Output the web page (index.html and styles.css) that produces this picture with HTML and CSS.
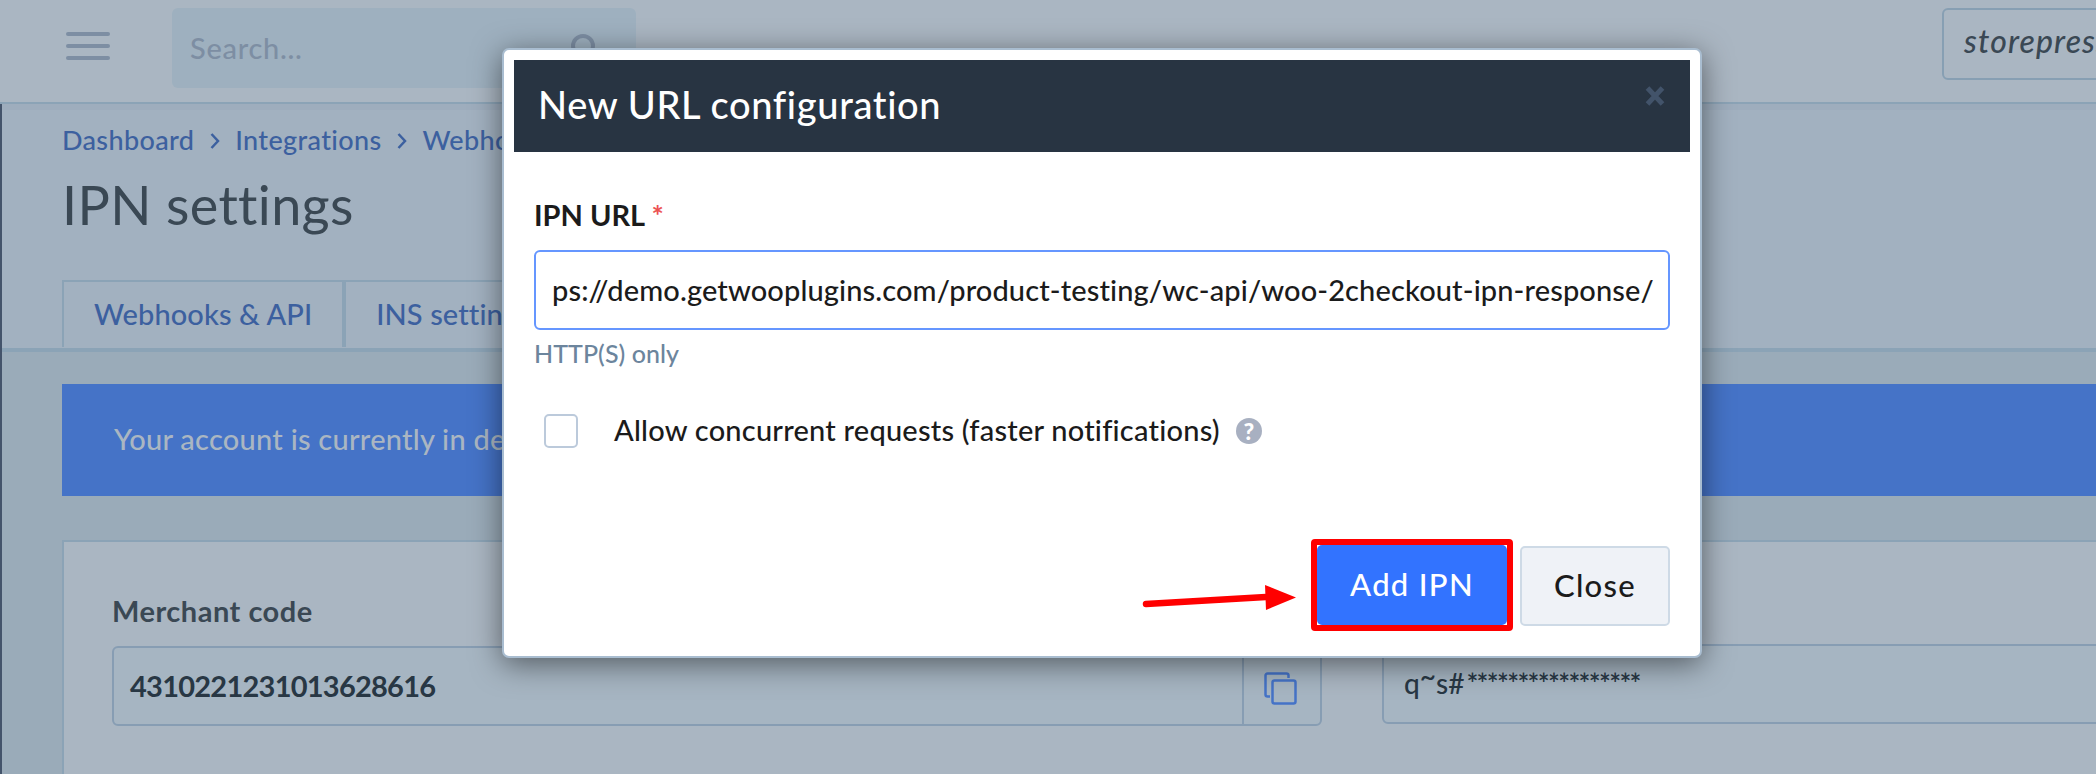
FILE: index.html
```
<!DOCTYPE html>
<html lang="en">
<head>
  <meta charset="UTF-8">
  <meta name="viewport" content="width=device-width, initial-scale=1.0">
  <title>IPN settings</title>
  <link rel="stylesheet" href="styles.css">
</head>
<body>
  <header class="topbar">
    <div class="menu-icon"><span></span><span></span><span></span></div>
    <div class="search">
      <span>Search...</span>
      <svg width="32" height="32" viewBox="0 0 32 32">
        <circle cx="14" cy="14" r="10" />
        <path d="M21 21l8 8" />
      </svg>
    </div>
    <div class="store">storepress</div>
  </header>

  <main class="page">
    <section class="page-head">
      <nav class="breadcrumb">
        <a>Dashboard</a>
        <svg width="10" height="16" viewBox="0 0 10 16"><path d="M1.500 1l6.500 7-6.500 7" /></svg>
        <a>Integrations</a>
        <svg width="10" height="16" viewBox="0 0 10 16"><path d="M1.500 1l6.500 7-6.500 7" /></svg>
        <a>Webhooks</a>
      </nav>
      <h1>IPN settings</h1>
      <div class="tabs">
        <a class="tab">Webhooks &amp; API</a>
        <a class="tab">INS settings</a>
      </div>
    </section>

    <div class="banner">Your account is currently in demo</div>

    <section class="card">
      <div class="field merchant">
        <label>Merchant code</label>
        <div class="code-box">
          <span class="code">4310221231013628616</span>
          <span class="copy">
            <svg width="34" height="34" viewBox="0 0 34 34">
              <path d="M7 24.500H4.500a2 2 0 0 1-2-2V3.500a2 2 0 0 1 2-2h19a2 2 0 0 1 2 2V6" />
              <rect x="9.500" y="8.500" width="23" height="23" rx="2" />
            </svg>
          </span>
        </div>
      </div>
      <div class="field secret">
        <div class="secret-box">q<span class="tilde">~</span>s#<span class="stars">*****************</span></div>
      </div>
    </section>
  </main>

  <div class="modal">
    <div class="modal-head">
      <h2>New URL configuration</h2>
      <svg class="modal-x" width="22" height="22" viewBox="0 0 22 22"><path d="M3.500 3l15 16M18.500 3l-15 16" /></svg>
    </div>
    <div class="modal-body">
      <label class="url-label">IPN URL <span class="required">*</span></label>
      <input class="url-input" type="text" value="ps://demo.getwooplugins.com/product-testing/wc-api/woo-2checkout-ipn-response/">
      <p class="hint">HTTP(S) only</p>
      <div class="check-row">
        <span class="checkbox"></span>
        <span class="check-text">Allow concurrent requests (faster notifications)</span>
        <span class="help">?</span>
      </div>
      <div class="actions">
        <svg class="arrow" width="156" height="34" viewBox="0 0 156 34">
          <path class="arrow-line" d="M6 22L126 15" />
          <path class="arrow-head" d="M125 3l31 12.500-30 12.500z" />
        </svg>
        <div class="highlight"><button class="btn btn-primary">Add IPN</button></div>
        <button class="btn btn-close">Close</button>
      </div>
    </div>
  </div>
</body>
</html>
```

FILE: styles.css
```
* {
  box-sizing: border-box;
}
body {
  margin: 0;
  height: 774px;
  overflow: hidden;
  position: relative;
  font-family: Lato, "Liberation Sans", sans-serif;
  font-size: 29px;
  font-weight: 500;
  line-height: 36px;
  background: #9aabb9;
  color: #3a4854;
}
h1, h2, p {
  margin: 0;
  font-weight: 500;
}
svg {
  fill: none;
  flex-shrink: 0;
}

/* top bar */
.topbar {
  display: flex;
  align-items: flex-start;
  height: 104px;
  padding: 8px 0 0 66px;
  background: #aab6c2;
  border-bottom: 2px solid #8ba3b6;
  overflow: hidden;
}
.menu-icon {
  display: flex;
  flex-direction: column;
  flex-shrink: 0;
  gap: 8px;
  width: 44px;
  margin-top: 24px;
}
.menu-icon span {
  height: 4px;
  border-radius: 2px;
  background: #7d8ea3;
}
.search {
  display: flex;
  align-items: center;
  justify-content: space-between;
  flex-shrink: 0;
  width: 464px;
  height: 80px;
  margin-left: 62px;
  padding: 0 35px 0 18px;
  border-radius: 6px;
  background: #9eb0bf;
  color: #7d8ea3;
  letter-spacing: 0.7px;
}
.search svg {
  stroke: #7d8ea3;
  stroke-width: 4;
}
.store {
  width: 260px;
  height: 72px;
  margin-left: 1306px;
  padding: 13px 0 0 20px;
  flex-shrink: 0;
  border: 2px solid #879fb3;
  border-radius: 6px;
  font-size: 32px;
  font-style: italic;
  letter-spacing: 1.1px;
  line-height: 36px;
}

/* page */
.page {
  height: 670px;
  border-left: 2px solid #44546b;
  overflow: hidden;
}
.page-head {
  height: 248px;
  padding: 18px 0 0 60px;
  background: #a2b1c0;
  border-bottom: 4px solid #8ba3b6;
  box-shadow: inset 0 6px #9eadbd;
}
.breadcrumb {
  display: flex;
  align-items: center;
  height: 36px;
  color: #3c609f;
  font-size: 27px;
  letter-spacing: 0.35px;
}
.breadcrumb svg {
  margin: 2px 15px 0 16px;
  stroke: #3c609f;
  stroke-width: 2.5;
}
h1 {
  margin-top: 15px;
  font-size: 54px;
  font-weight: 400;
  line-height: 64px;
  letter-spacing: 0.35px;
}
.tabs {
  display: flex;
  width: fit-content;
  margin-top: 43px;
  border-top: 2px solid #8ba3b6;
}
.tab {
  height: 65px;
  padding: 14px 30px 0;
  border-left: 2px solid #8ba3b6;
  border-right: 2px solid #8ba3b6;
  color: #3c609f;
  letter-spacing: 0.1px;
}
.banner {
  height: 112px;
  margin: 32px 0 0 60px;
  padding: 37px 52px;
  background: #4573c7;
  color: #aab6c2;
  letter-spacing: 0.25px;
}
.card {
  display: flex;
  gap: 60px;
  height: 300px;
  margin: 44px -60px 0 60px;
  padding: 51px 0 0 48px;
  background: #aab6c2;
  border: 2px solid #8ba3b6;
}
.field label {
  display: block;
  font-weight: 700;
  letter-spacing: 0.5px;
}
.merchant {
  width: 1210px;
  flex-shrink: 0;
}
.code-box,
.secret-box {
  height: 80px;
  border: 2px solid #879db3;
  border-radius: 6px;
  background: #a6b5c2;
}
.code-box {
  display: flex;
  align-items: center;
  margin-top: 17px;
}
.code {
  flex: 1;
  padding-left: 16px;
  color: #283744;
  font-weight: 700;
  letter-spacing: -0.75px;
}
.copy {
  display: flex;
  align-items: center;
  justify-content: center;
  width: 78px;
  height: 76px;
  padding: 6px 4px 0 0;
  border-left: 2px solid #879db3;
}
.copy svg {
  stroke: #4573c7;
  stroke-width: 2.5;
}
.secret {
  flex: 1;
  padding-top: 51px;
}
.secret-box {
  padding: 19px 0 0 20px;
  color: #283744;
  font-size: 28px;
}
.tilde {
  position: relative;
  top: -7px;
}
.stars {
  margin-left: 2px;
  font-weight: 600;
  letter-spacing: -1.7px;
}

/* modal */
.modal {
  position: absolute;
  top: 48px;
  left: 502px;
  width: 1200px;
  height: 610px;
  padding: 10px;
  background: #fff;
  border: 2px solid #a9bdd0;
  border-radius: 7px;
  box-shadow: 0 6px 30px rgba(0, 0, 0, 0.5);
  color: #1b1b1b;
}
.modal-head {
  display: flex;
  justify-content: space-between;
  height: 92px;
  padding: 25px 24px 0 24px;
  background: #283442;
}
h2 {
  color: #fff;
  font-size: 38px;
  line-height: 38px;
  letter-spacing: 0.65px;
}
.modal-x {
  stroke: #42536a;
  stroke-width: 5;
}
.modal-body {
  padding: 45px 20px 0;
}
.url-label {
  display: block;
  font-weight: 700;
}
.required {
  color: #ec5252;
}
.url-input {
  display: block;
  width: 1136px;
  height: 80px;
  margin-top: 17px;
  padding: 0 14px 2px 16px;
  border: 2px solid #6596ff;
  border-radius: 6px;
  outline: none;
  color: #1b1b1b;
  font: inherit;
  letter-spacing: 0.12px;
}
.hint {
  margin-top: 5px;
  color: #6c859d;
  font-size: 25px;
  letter-spacing: 0.05px;
}
.check-row {
  display: flex;
  align-items: center;
  height: 34px;
  margin: 43px 0 0 10px;
}
.checkbox {
  width: 34px;
  height: 34px;
  border: 2px solid #bccadb;
  border-radius: 5px;
}
.check-text {
  margin: -3px 16px 0 36px;
  letter-spacing: 0.22px;
}
.help {
  width: 26px;
  height: 26px;
  border-radius: 50%;
  background: #a8b0c1;
  color: #fff;
  font-size: 23px;
  font-weight: 900;
  line-height: 26px;
  text-align: center;
}
.actions {
  display: flex;
  justify-content: flex-end;
  align-items: flex-start;
  margin-top: 91px;
}
.arrow {
  margin: 43px 15px 0 0;
}
.arrow-line {
  stroke: #f00;
  stroke-width: 6.5;
  stroke-linecap: round;
}
.arrow-head {
  fill: #f00;
}
.highlight {
  margin-right: 7px;
  border: 6px solid #f00;
  border-radius: 4px;
}
.btn {
  display: block;
  height: 80px;
  padding: 0 0 3px;
  border: 0;
  border-radius: 5px;
  font-family: inherit;
  font-size: 31px;
  font-weight: 500;
  letter-spacing: 1.3px;
}
.btn-primary {
  width: 190px;
  background: #3273ff;
  color: #fff;
}
.btn-close {
  width: 150px;
  margin-top: 7px;
  border: 2px solid #cedae6;
  background: #eff2f7;
  color: #1b1b1b;
}
```
